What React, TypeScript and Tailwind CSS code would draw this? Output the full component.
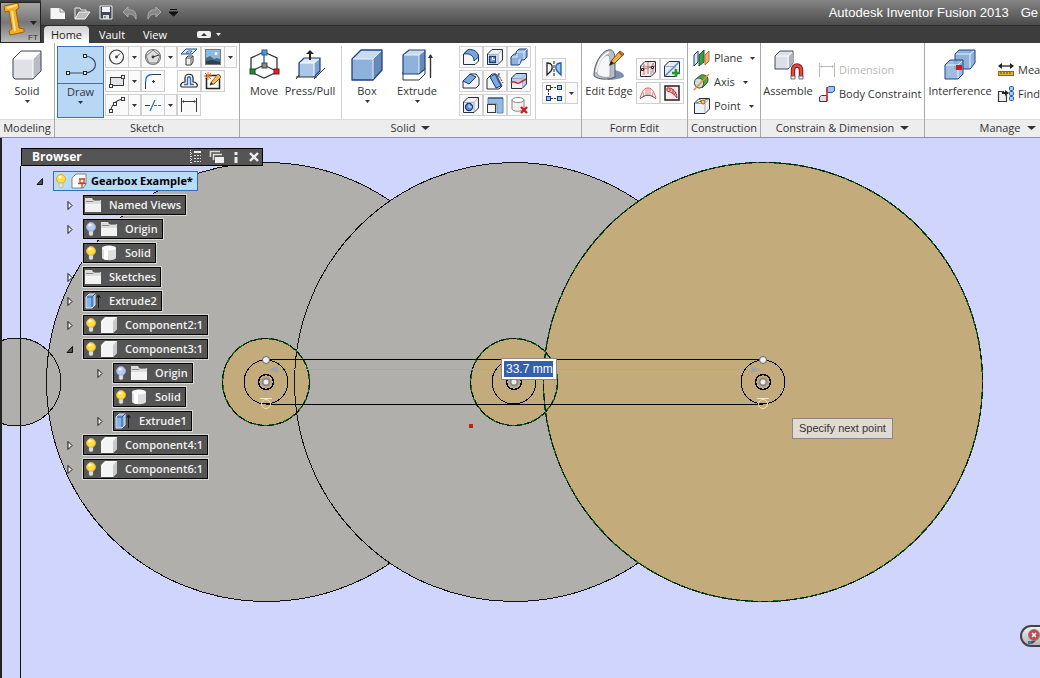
import React, { useState } from "react";

const NAVY = "#1b3a75";
const INK = "#3a3a3a";

const Svg = ({ w = 18, h = 18, children, className = "" }: any) => (
  <svg width={w} height={h} viewBox={`0 0 ${w} ${h}`} fill="none" className={`shrink-0 ${className}`} aria-hidden="true">
    {children}
  </svg>
);

const Caret = ({ className = "" }: { className?: string }) => (
  <Svg w={7} h={5} className={className}>
    <path d="M1 1h5L3.5 4z" fill="#333" />
  </Svg>
);

/* ---------- large ribbon icons ---------- */

const SolidIcon = () => (
  <Svg w={32} h={32}>
    <path d="M2 10L11 2H30L22 10z" fill="#fbfbfc" />
    <path d="M22 10L30 2V22L22 30z" fill="#b9bcc4" />
    <path d="M2 10H22V30H2z" fill="#dfe1e6" />
    <path d="M2 10L10 2H30V22L22 30H4L2 28z" stroke="#40434b" strokeLinejoin="round" />
    <path d="M3 10H22V29M22 10L29 3" stroke="#fff" />
  </Svg>
);

const DrawIcon = () => (
  <Svg w={32} h={32}>
    <path d="M3 24H19M20 7C34 8 34 23 20 24" stroke="#3b4a60" strokeWidth="1.2" />
    {[[18, 5], [1, 22], [18, 22]].map(([x, y]) => (
      <rect key={`${x}${y}`} x={x + 0.5} y={y + 0.5} width="3" height="3" fill="#fff" stroke="#222" />
    ))}
  </Svg>
);

const MoveIcon = () => (
  <Svg w={32} h={32}>
    <path d="M16 3L29 9V23L16 29L3 23V9z" stroke="#333" strokeWidth="1.3" />
    <path d="M16 16V3" stroke="#2f78c4" strokeWidth="1.5" />
    <path d="M16 16L4 22M16 16L28 22" stroke="#444" strokeWidth="1.3" />
    <rect x="14" y="1" width="5" height="5" fill="#4c97dd" stroke="#235a92" />
    <rect x="2" y="20" width="5" height="5" fill="#26892b" stroke="#125416" />
    <rect x="26" y="20" width="5" height="5" fill="#d8222a" stroke="#8a1016" />
    <rect x="14" y="14" width="5" height="5" fill="#888" stroke="#444" />
  </Svg>
);

const PressPullIcon = () => (
  <Svg w={32} h={32}>
    <path d="M5 14L10 9H26L20 14z" fill="#dcebfa" />
    <path d="M20 14L26 9V22L20 28z" fill="#7ba3cf" />
    <path d="M5 14H20V28H5z" fill="#a9c8e8" />
    <path d="M5 28V14L10 9H26V22L20 28" stroke={NAVY} strokeWidth="1.2" />
    <path d="M6 14H20V27M20 14L25 10" stroke="#fff" />
    <path d="M2 28H23M20 30L31 19M2 30L5 26" stroke="#333" />
    <path d="M16 11V4" stroke="#222" strokeWidth="2" />
    <path d="M12 5L16 1L20 5z" fill="#222" />
  </Svg>
);

const BoxIcon = () => (
  <Svg w={32} h={32}>
    <path d="M1 10L10 1H31L22 10z" fill="#c8dcf1" />
    <path d="M22 10L31 1V21L22 31z" fill="#6689b7" />
    <path d="M1 10H22V31H1z" fill="#8fb2dc" />
    <path d="M1 10L10 1H31V21L22 31H1z" stroke="#1d4288" strokeWidth="1.3" strokeLinejoin="round" />
    <path d="M2 10H22V30M22 10L30 2" stroke="#e9f2fb" />
  </Svg>
);

const ExtrudeIcon = () => (
  <Svg w={32} h={32}>
    <path d="M2 23L8 19H24V25L18 31H2z" fill="#fff" stroke="#333" />
    <path d="M2 6L8 1H24L18 6z" fill="#c8dcf1" />
    <path d="M18 6L24 1V20L18 25z" fill="#6689b7" />
    <path d="M2 6H18V25H2z" fill="#8fb2dc" />
    <path d="M2 25V6L8 1H24V20L18 25z" stroke="#1d4288" strokeWidth="1.2" />
    <path d="M3 6H18V24M18 6L23 2" stroke="#e9f2fb" />
    <path d="M29.5 29V6" stroke="#333" strokeWidth="1.4" />
    <path d="M27 9L29.5 5L32 9z" fill="#333" />
  </Svg>
);

const EditEdgeIcon = () => (
  <Svg w={32} h={32}>
    <path d="M14 31C22 31 31 29 31 27C31 24 26 22 22 21z" fill="#60759b" opacity="0.8" />
    <path d="M1 26C1 15 8 3 15 1C20 0 22 3 22 12V28C15 31 6 31 1 27z" fill="#b9bec7" stroke="#555c68" />
    <path d="M4 25C4 16 9 7 15 6C18 7 17 17 17 28C12 29 7 28 4 25z" fill="#f5f7f9" stroke="#8d94a0" strokeWidth="0.8" />
    <path d="M3 23C5 13 9 6 16 3" stroke="#fff" strokeWidth="1.5" />
    <path d="M17 16L19 11L27 2L31 5L22 14z" fill="#f0b03f" stroke="#74501f" />
    <path d="M26 3L30 7" stroke="#9d3c25" strokeWidth="1.5" />
    <path d="M16 17L18 12L21 14z" fill="#222" />
  </Svg>
);

const AssembleIcon = () => (
  <Svg w={32} h={32}>
    <path d="M3 7L8 2H21V14L16 20H3z" fill="#dcdfe5" stroke="#444a55" strokeLinejoin="round" />
    <path d="M17 7L21 3V14L17 18z" fill="#aeb3bd" />
    <path d="M4 7H16V19M16 7L20 3" stroke="#fff" />
    <path d="M21 28V21C21 15 29 15 29 21V28" stroke="#8b1114" strokeWidth="4.5" />
    <path d="M21 28V21C21 15 29 15 29 21V28" stroke="#e14a45" strokeWidth="2.5" />
    <path d="M19 27H23V30H19zM27 27H31V30H27z" fill="#eee" stroke="#555" strokeWidth="0.8" />
  </Svg>
);

const InterferenceIcon = () => (
  <Svg w={32} h={32}>
    <path d="M11 5L15 1H31V14L26 20H11z" fill="#8fb2dc" stroke="#1d4288" />
    <path d="M12 5H26V19M26 5L30 2" stroke="#e9f2fb" />
    <path d="M1 16L6 11H19V25L14 30H1z" fill="#8fb2dc" fillOpacity="0.85" stroke="#1d4288" />
    <path d="M2 16H14V29M14 16L18 12" stroke="#e9f2fb" />
    <rect x="12" y="16" width="6" height="5" fill="#dd1022" />
  </Svg>
);

/* ---------- small ribbon icons, 18 x 18 ---------- */

const CircleIcon = () => (
  <Svg>
    <circle cx="8.5" cy="9" r="7" stroke={INK} strokeWidth="1.2" />
    <path d="M8.5 9L12 5.5" stroke={INK} />
    <circle cx="8.5" cy="9" r="1.4" fill={INK} />
  </Svg>
);

const PolygonIcon = () => (
  <Svg>
    <circle cx="9" cy="9" r="7.5" stroke="#777" strokeWidth="1.2" />
    <path d="M9 2L16 8L13 15H5L2 8z" fill="#ddd" stroke="#777" />
    <path d="M9 9L15 7" stroke={INK} />
    <circle cx="9" cy="9" r="1.4" fill={INK} />
  </Svg>
);

const ProjectIcon = () => (
  <Svg>
    <path d="M6 1H17L12 6H1z" fill="#d6e8fa" stroke="#1c4f91" />
    <path d="M8 3H12L10 5H6z" fill="#fff" stroke="#1c4f91" strokeWidth="0.8" />
    <path d="M6 10L8 8H13V14L11 17H6z" fill="#eee" stroke={INK} />
    <path d="M6 10H11V16M11 10L13 8" stroke={INK} strokeWidth="0.8" />
  </Svg>
);

const PictureIcon = () => (
  <Svg>
    <rect x="1.5" y="1.5" width="15" height="15" fill="#8bbbe3" stroke="#777" />
    <path d="M2 10L6 8L10 11L13 10L16 11V16H2z" fill="#4d6b84" />
    <path d="M2 13L8 12L16 14V16H2z" fill="#2c4054" />
    <circle cx="12" cy="5.5" r="1.5" fill="#fff" />
  </Svg>
);

const RectIcon = () => (
  <Svg>
    <rect x="2.5" y="5.5" width="13" height="8" fill="#e2e4e8" stroke={INK} />
    <rect x="1.5" y="12.5" width="3" height="3" fill="#fff" stroke={INK} />
    <rect x="13.5" y="3.5" width="3" height="3" fill="#fff" stroke={INK} />
  </Svg>
);

const FilletIcon = () => (
  <Svg>
    <path d="M8 2.5H17M1.5 10V17" stroke={INK} />
    <path d="M1.5 10C1.5 5 4 2.5 8 2.5" stroke="#257ec9" strokeWidth="1.4" />
    <path d="M8 9.5H11M9.5 8V11" stroke={INK} />
  </Svg>
);

const OffsetIcon = () => (
  <Svg>
    <path d="M5 10V6C5 1 13 1 13 6V10C18 10 18 15 16 15H2C0 15 0 10 5 10z" fill="#fff" stroke="#222" strokeWidth="1.2" />
    <path d="M4 12.500H7.500V7C7.500 4 10.500 4 10.500 7V12.500H14" stroke="#2c6eb5" strokeWidth="1.5" />
  </Svg>
);

const EditSketchIcon = () => (
  <Svg>
    <rect x="2.5" y="3.5" width="13" height="13" fill="#fff" stroke="#222" strokeWidth="1.5" />
    <path d="M6 13L8 9L14 2L17 5L10 12z" fill="#f5bc4b" stroke="#7a501b" strokeWidth="0.8" />
    <path d="M4 0V8M0 4H8M1 1L7 7M7 1L1 7" stroke="#e8731f" />
    <path d="M6 13L7 10L9 12z" fill="#222" />
  </Svg>
);

const ArcIcon = () => (
  <Svg>
    <path d="M2.5 15C4 8 8 4 15 3" stroke={INK} strokeWidth="1.2" />
    <rect x="1.5" y="13.5" width="3" height="3" fill="#fff" stroke={INK} />
    <rect x="5.5" y="6.5" width="3" height="3" fill="#fff" stroke={INK} />
    <rect x="13.5" y="1.5" width="3" height="3" fill="#fff" stroke={INK} />
  </Svg>
);

const TrimIcon = () => (
  <Svg>
    <path d="M1 9.5H6" stroke={INK} />
    <path d="M6 15L11 4" stroke="#2674bc" strokeWidth="1.3" />
    <path d="M10 9.5H17" stroke="#2674bc" strokeDasharray="3 1" />
  </Svg>
);

const DimIcon = ({ color = INK }: { color?: string }) => (
  <Svg>
    <path d="M1.5 2V16M16.5 2V16M3 5.5H15" stroke={color} />
    <path d="M2 5.5L4 4V7zM16 5.5L14 4V7z" fill={color} />
  </Svg>
);

const Block = ({ fill = "#eef2f7", children }: any) => (
  <Svg>
    <path d="M1.5 6L6 1.500H16.500V12L12 16.500H1.500z" fill={fill} stroke="#26303f" strokeLinejoin="round" />
    <path d="M2 6.500H12V16M12 6.500L16 2" stroke="#8f9db0" strokeWidth="0.8" />
    {children}
  </Svg>
);

const SolidFillet = () => (
  <Svg>
    <path d="M1.500 6V16.500H13L16.500 13V7L6 2z" fill="#f3f5f8" stroke="#26303f" />
    <path d="M6 1.500C12 1 16.500 4 16.500 9L12 13C12 8 8 5 2 6z" fill="#75a6de" stroke={NAVY} />
  </Svg>
);

const ShellIcon = () => (
  <Block>
    <path d="M3.500 8.500H9.500V14.500H3.500z" fill="#6fa3df" stroke={NAVY} strokeWidth="1.3" />
    <path d="M6.500 9V11.500H9" stroke="#fff" />
  </Block>
);

const CombineIcon = () => (
  <Svg>
    <path d="M6 4L9 1H17V9L14 12H11V14L9 17H1V9L4 6H6z" fill="#8fb2dc" stroke="#1d4288" />
    <path d="M7 4H14V11M14 4L17 1M2 9H7V6M11 12H9V16" stroke="#e3effc" />
  </Svg>
);

const ChamferIcon = () => (
  <Svg>
    <path d="M1 9L8 2H14L17 6V13L14 16H1z" fill="#f3f5f8" stroke="#26303f" />
    <path d="M1 9L8 2L14 5L7 12z" fill="#79a9df" stroke={NAVY} />
  </Svg>
);

const DraftIcon = () => (
  <Svg>
    <path d="M1 7L6 2H10L16 14L13 17H1z" fill="#f3f5f8" stroke="#26303f" />
    <path d="M4 5L9 2L15 14L10 16z" fill="#79a9df" stroke={NAVY} />
    <path d="M12 2L17 11M12 5V2H15" stroke={INK} strokeDasharray="2 1" />
  </Svg>
);

const SplitIcon = () => (
  <Block fill="#b7d2ef">
    <path d="M2 10H12V16H2z" fill="#eee" />
    <path d="M1 11C4 7 7 14 11 10L16 7" stroke="#d8232a" strokeWidth="1.5" />
  </Block>
);

const HoleIcon = () => (
  <Block>
    <circle cx="7" cy="11" r="3.5" fill="#5f97dc" stroke={NAVY} strokeWidth="1.3" />
    <path d="M7 8V11H10" stroke="#d9e9fb" />
  </Block>
);

const ScaleIcon = () => (
  <Svg>
    <path d="M2 2H17V17H11V8H2z" fill="#94bbe4" stroke="#6189b5" />
    <rect x="1.5" y="8.500" width="8" height="8" fill="#f4f4f4" stroke={INK} />
    <path d="M2 2H17" stroke={NAVY} />
  </Svg>
);

const DeleteIcon = () => (
  <Svg>
    <path d="M2 4V13C3 16 12 16 14 13V4" fill="#f0f0f0" stroke="#888" />
    <ellipse cx="8" cy="4" rx="6" ry="2.5" fill="#fff" stroke="#888" />
    <path d="M11 11L17 17M17 11L11 17" stroke="#d31a20" strokeWidth="2.4" />
  </Svg>
);

const MirrorIcon = () => (
  <Svg>
    <path d="M2 3C8 3 8 8 6 11L2 15z" fill="#fff" stroke="#222" strokeWidth="1.3" />
    <path d="M16 3C10 3 10 8 12 11L16 15z" fill="#8fc0f0" stroke="#1b5ea8" strokeWidth="1.3" />
    <path d="M9 1V17" stroke="#222" strokeDasharray="3 1" />
  </Svg>
);

const PatternIcon = () => (
  <Svg>
    <path d="M6 3.500H12M3.500 6V12M6 14.500H12" stroke={INK} strokeDasharray="2 1" />
    <rect x="1.500" y="1.500" width="4" height="4" fill="#fff" stroke={INK} />
    <rect x="12.500" y="1.500" width="4" height="4" fill="#9bc4f0" stroke={NAVY} />
    <rect x="1.500" y="12.500" width="4" height="4" fill="#9bc4f0" stroke={NAVY} />
    <rect x="12.500" y="12.500" width="4" height="4" fill="#9bc4f0" stroke={NAVY} />
  </Svg>
);

const ControlPointsIcon = () => (
  <Block fill="#f4e8e8">
    <path d="M5 4V15M9 2V14M14 3V13M1 10L16 6" stroke="#c0494b" strokeWidth="0.8" />
    <path d="M2.500 8.500H4.500V10.500H2.500zM12.500 6.500H14.500V8.500H12.500z" fill="#fff" stroke="#222" />
  </Block>
);

const AddEdgeIcon = () => (
  <Block fill="#e3eaf2">
    <path d="M2 16L16 2" stroke="#5b87ba" strokeWidth="1.5" />
    <path d="M13 9V17M9 13H17" stroke="#2b9532" strokeWidth="2.4" />
  </Block>
);

const CurvatureIcon = () => (
  <Svg>
    <path d="M1 14C4 5 6 4 9 4C12 4 14 5 17 14" stroke="#cf6767" />
    <path d="M4 8L5 13M7 5V12M9 4V12M11 5V12M14 8L13 13" stroke="#d98585" />
    <path d="M1 15C6 10 12 10 17 15" stroke="#555" />
  </Svg>
);

const ZebraIcon = () => (
  <Svg>
    <path d="M2 2H16V16H2z" fill="#f8eaea" stroke="#222" strokeWidth="1.5" />
    <path d="M4 4C9 3 14 8 14 14C12 11 9 8 4 7z" fill="#efb4b4" stroke="#bd3232" />
    <path d="M7 4V7M10 5V9M13 8L11 11" stroke="#bd3232" />
  </Svg>
);

const PlaneIcon = () => (
  <Svg>
    <path d="M1 6L5 2V13L1 17z" fill="#dbe6f2" stroke={NAVY} />
    <path d="M6 6L11 1V13L6 17z" fill="#38a043" stroke="#1b5b22" />
    <path d="M12 6L16 2V12L12 16z" fill="#f3b07c" stroke="#c96a2a" />
  </Svg>
);

const AxisIcon = () => (
  <Svg>
    <path d="M3 6L8 2C13 1 17 5 14 10L9 15z" fill="#50a64b" stroke="#285e26" />
    <ellipse cx="6" cy="10" rx="4.5" ry="5" transform="rotate(-30 6 10)" fill="#d2dde0" stroke="#38683a" />
    <path d="M1 17L16 1" stroke="#ed8a34" strokeWidth="1.5" />
  </Svg>
);

const PointIcon = () => (
  <Block>
    <path d="M3 6L15 2M6 2L12 6" stroke="#328a37" />
    <circle cx="10" cy="5" r="2" fill="#f2d14d" stroke="#c0532c" />
  </Block>
);

const BodyConstraintIcon = () => (
  <Svg>
    <path d="M1.500 12L3.500 10.500H9V16.500H1.500z" fill="#dfe1e5" stroke={INK} />
    <path d="M9 3L11 1.500H16.500V6L14 7.500H9z" fill="#9cc5ef" stroke="#29609f" />
    <path d="M9 2V16" stroke="#d8222a" strokeWidth="1.5" />
  </Svg>
);

const MeasureIcon = () => (
  <Svg>
    <path d="M2 5H16" stroke="#222" strokeWidth="1.3" />
    <path d="M1 5L5 2V8zM17 5L13 2V8z" fill="#222" />
    <rect x="1.5" y="10.500" width="15" height="4" fill="#e5b334" stroke="#8d6717" />
    <path d="M4 11V13M7 11V13M10 11V13M13 11V13" stroke="#5d440f" />
  </Svg>
);

const FindIcon = () => (
  <Svg>
    <path d="M7 6.500H1.500V16.500H9.500V10" fill="#eee" stroke={INK} strokeWidth="1.2" />
    <path d="M5 8H9" stroke="#222" strokeWidth="2" />
    <path d="M8 5L12 8L8 11z" fill="#222" />
    {[1, 6, 11].map((y) => (
      <rect key={y} x="12.500" y={y + 0.5} width="4" height="4" rx="1" fill="#a4cbf2" stroke="#225a9d" />
    ))}
  </Svg>
);

/* ---------- browser tree icons ---------- */

const Bulb = ({ on }: { on: boolean }) => (
  <Svg w={12} h={16}>
    <circle cx="6" cy="6" r="4.500" fill={on ? "#ffdf44" : "#b7cbf2"} stroke={on ? "#e0ac28" : "#91a6d0"} />
    <circle cx="5" cy="4" r="1.600" fill="#fff" opacity="0.85" />
    <path d="M4 10H8V14L6 15L4 14z" fill="#e2e2e2" stroke="#999" strokeWidth="0.5" />
  </Svg>
);

const FolderIcon = () => (
  <Svg w={16} h={16}>
    <path d="M0 1H7L8 3H16V15H0z" fill="#dcdcdc" />
    <path d="M1 4.500H8L9 3.500H15" stroke="#8a8a8a" />
    <path d="M0 7H16V15H0z" fill="#f2f2f2" />
  </Svg>
);

const CylinderIcon = () => (
  <Svg w={16} h={16}>
    <path d="M1 3V13C3 16 13 16 15 13V3z" fill="#dedede" />
    <path d="M3 4V14C4 15 5 15 7 15V4z" fill="#fff" />
    <ellipse cx="8" cy="3" rx="7" ry="2.500" fill="#fafafa" />
  </Svg>
);

const CubeIcon = () => (
  <Svg w={16} h={16}>
    <path d="M0 4L4 0H16V12L12 16H0z" fill="#f4f4f4" />
    <path d="M12 4L16 0V12L12 16z" fill="#c8c8c8" />
  </Svg>
);

const ExtrudeNodeIcon = () => (
  <Svg w={16} h={16}>
    <path d="M1 4L4 1H10V12L7 15H1z" fill="#86b3e6" stroke="#dbe9f8" />
    <path d="M2 4H7V14M7 4L10 1" stroke="#2a5596" />
    <path d="M13.500 15V3M11.500 5L13.500 2L15.500 5" stroke="#191919" />
  </Svg>
);

const RootIcon = () => (
  <Svg w={16} h={16}>
    <path d="M1 5L5 1H15V11L12 15H1z" fill="#fff" stroke="#666" strokeWidth="0.8" />
    <path d="M8 6H14M9 6V10H13V6M7 10.500H15M11 11V15" stroke="#c4451d" strokeWidth="1.3" />
  </Svg>
);

/* ---------- ribbon building blocks ---------- */

const BigButton = ({ icon: Icon, label, caret = false, width }: any) => (
  <button className={`flex h-[72px] flex-col items-center pt-[3px] ${width}`}>
    <Icon />
    <span className="mt-[2px] leading-4 whitespace-nowrap">{label}</span>
    {caret && <Caret />}
  </button>
);

const Cell = ({ icon: Icon, label, drop = false }: any) => (
  <div className="flex">
    <button aria-label={label} className="flex h-[22px] w-6 items-center justify-center border border-[#d0d0d0] bg-[#fafafa]">
      <Icon />
    </button>
    {drop && (
      <button aria-label={`${label} options`} className="flex h-[22px] w-3 items-center justify-center border border-l-0 border-[#d0d0d0] bg-[#fafafa]">
        <Caret />
      </button>
    )}
  </div>
);

const RowButton = ({ icon, label, caret = false, disabled = false }: any) => (
  <button disabled={disabled} className="flex h-6 items-center gap-[3px] whitespace-nowrap disabled:text-[#b9b9b9]">
    {icon}
    <span>{label}</span>
    {caret && <Caret className="ml-1" />}
  </button>
);

const Panel = ({ title, width, more = false, children }: any) => (
  <section className={`flex shrink-0 flex-col border-r border-[#a9a9a9] ${width}`}>
    <div className="flex h-[76px] bg-white pt-[3px]">{children}</div>
    <footer className="flex h-[18px] items-center justify-center gap-[6px] border-t border-[#dcdcdc] bg-[#ededed] pb-[2px]">
      <span className="leading-4">{title}</span>
      {more && (
        <Svg w={9} h={6}>
          <path d="M0 1H9L4.500 5z" fill="#333" />
        </Svg>
      )}
    </footer>
  </section>
);

const Ribbon = () => (
  <div className="flex overflow-hidden border-b border-[#8d90a8] bg-[#ededed] font-['Open_Sans','Noto_Sans',sans-serif] text-[11px] text-[#333]">
    <Panel title="Modeling" width="w-[55px]">
      <BigButton icon={SolidIcon} label="Solid" caret width="w-[54px]" />
    </Panel>
    <Panel title="Sketch" width="w-[185px]">
      <button className="ml-[2px] flex h-[72px] w-[47px] flex-col items-center border border-[#3973b6] bg-[#b7d7f5]">
        <span className="flex h-[37px] w-full justify-center border-b border-[#3973b6] pt-[2px]">
          <DrawIcon />
        </span>
        <span className="leading-4">Draw</span>
        <Caret />
      </button>
      <div className="ml-[1px] flex flex-col gap-[2px]">
        <div className="flex">
          <Cell icon={CircleIcon} label="Circle" drop />
          <Cell icon={PolygonIcon} label="Polygon" drop />
          <Cell icon={ProjectIcon} label="Project" />
          <Cell icon={PictureIcon} label="Image" drop />
        </div>
        <div className="flex">
          <Cell icon={RectIcon} label="Rectangle" drop />
          <Cell icon={FilletIcon} label="Sketch fillet" />
          <div className="ml-3 flex">
            <Cell icon={OffsetIcon} label="Offset" />
            <Cell icon={EditSketchIcon} label="Edit sketch" />
          </div>
        </div>
        <div className="flex">
          <Cell icon={ArcIcon} label="Arc" drop />
          <Cell icon={TrimIcon} label="Trim" drop />
          <Cell icon={DimIcon} label="Sketch dimension" />
        </div>
      </div>
    </Panel>
    <Panel title="Solid" width="w-[342px]" more>
      <BigButton icon={MoveIcon} label="Move" width="w-12" />
      <BigButton icon={PressPullIcon} label="Press/Pull" width="w-[44px]" />
      <div className="ml-[9px] border-r border-[#d0d0d0]" />
      <BigButton icon={BoxIcon} label="Box" caret width="w-[50px]" />
      <BigButton icon={ExtrudeIcon} label="Extrude" caret width="w-[50px]" />
      <div className="ml-[17px] grid grid-cols-3 content-start gap-y-[2px] self-start">
        <Cell icon={SolidFillet} label="Fillet" />
        <Cell icon={ShellIcon} label="Shell" />
        <Cell icon={CombineIcon} label="Combine" />
        <Cell icon={ChamferIcon} label="Chamfer" />
        <Cell icon={DraftIcon} label="Draft" />
        <Cell icon={SplitIcon} label="Split" />
        <Cell icon={HoleIcon} label="Hole" />
        <Cell icon={ScaleIcon} label="Scale" />
        <Cell icon={DeleteIcon} label="Delete" />
      </div>
      <div className="ml-1 border-r border-[#d0d0d0]" />
      <div className="ml-[6px] flex flex-col gap-[2px] pt-3">
        <Cell icon={MirrorIcon} label="Mirror" />
        <Cell icon={PatternIcon} label="Pattern" drop />
      </div>
    </Panel>
    <Panel title="Form Edit" width="w-[106px]">
      <BigButton icon={EditEdgeIcon} label="Edit Edge" width="w-[54px]" />
      <div className="grid grid-cols-2 content-start gap-y-[2px] pt-3">
        <Cell icon={ControlPointsIcon} label="Control points" />
        <Cell icon={AddEdgeIcon} label="Add edge" />
        <Cell icon={CurvatureIcon} label="Curvature" />
        <Cell icon={ZebraIcon} label="Zebra" />
      </div>
    </Panel>
    <Panel title="Construction" width="w-[73px]">
      <div className="flex flex-col items-start pl-[5px]">
        <RowButton icon={<PlaneIcon />} label="Plane" caret />
        <RowButton icon={<AxisIcon />} label="Axis" caret />
        <RowButton icon={<PointIcon />} label="Point" caret />
      </div>
    </Panel>
    <Panel title="Constrain & Dimension" width="w-[164px]" more>
      <BigButton icon={AssembleIcon} label="Assemble" width="w-[54px]" />
      <div className="flex flex-col items-start pt-3 pl-[3px]">
        <RowButton icon={<DimIcon color="#b9b9b9" />} label="Dimension" disabled />
        <RowButton icon={<BodyConstraintIcon />} label="Body Constraint" />
      </div>
    </Panel>
    <Panel title="Manage" width="w-[166px]" more>
      <BigButton icon={InterferenceIcon} label="Interference" width="w-[70px]" />
      <div className="flex flex-col items-start pt-3 pl-[2px]">
        <RowButton icon={<MeasureIcon />} label="Mea" />
        <RowButton icon={<FindIcon />} label="Find" />
      </div>
    </Panel>
  </div>
);

const TitleBar = () => (
  <header className="flex bg-[#3d3d3d] font-['Open_Sans','Noto_Sans',sans-serif] text-[11px] text-white">
    <button aria-label="Application menu" className="mt-[2px] h-[41px] w-[41px] shrink-0 border border-[#222] bg-linear-to-b from-[#a5a5a5] via-[#777] to-[#bbb]">
      <svg width="39" height="39" viewBox="0 0 39 39">
        <path d="M3 3L17 0L18 5L15 7L18 25L23 26V29L9 32L8 28L11 26L8 8L4 9z" fill="#f5ad25" stroke="#9c6208" />
        <path d="M6 5L16 2M11 8L14 28" stroke="#ffe39a" strokeWidth="2" />
        <path d="M29 18H36L32.500 22z" fill="#222" />
        <text x="27" y="37" fontSize="8" fontFamily="Liberation Sans, sans-serif" fill="#333">FT</text>
      </svg>
    </button>
    <div className="flex min-w-0 flex-1 flex-col">
      <div className="flex h-[26px] items-center border-b border-[#2b2b2b] bg-linear-to-b from-[#858585] to-[#4c4c4c] pl-2">
        <div className="flex items-center gap-[6px]">
          <button aria-label="New"><Svg>
            <path d="M1.500 4H11L16 8V15H1.500z" fill="#f5f5f5" />
            <path d="M11 4V8H16" stroke="#888" />
          </Svg></button>
          <button aria-label="Open"><Svg>
            <path d="M2 15V4H7L8 6H13V8" stroke="#eee" />
            <path d="M2 15L6 8H17L12 15z" fill="#bbb" stroke="#f5f5f5" />
          </Svg></button>
          <button aria-label="Save"><Svg>
            <path d="M3 2H15V15H3z" fill="#3f4a58" stroke="#eee" />
            <path d="M5 3H13V8H5z" fill="#f4f4f4" />
            <path d="M6 11H12V15H6z" fill="#ddd" />
            <path d="M8 12V14" stroke="#333" />
          </Svg></button>
          <button aria-label="Undo"><Svg>
            <path d="M2 8L7 3V6C12 5 16 8 15 15C13 11 11 10 7 10V13z" fill="#888" stroke="#aaa" />
          </Svg></button>
          <button aria-label="Redo"><Svg>
            <path d="M16 8L11 3V6C6 5 2 8 3 15C5 11 7 10 11 10V13z" fill="#888" stroke="#aaa" />
          </Svg></button>
          <button aria-label="Customize"><Svg w={9} h={9}>
            <path d="M1 1.500H8M0 4H9L4.500 8z" stroke="#111" fill="#111" />
          </Svg></button>
        </div>
        <h1 className="ml-auto flex gap-3 pr-[2px] font-['Liberation_Sans',Arial,sans-serif] text-[13px] whitespace-nowrap">
          <span>Autodesk Inventor Fusion 2013</span>
          <span>Ge</span>
        </h1>
      </div>
      <nav className="flex h-[17px] items-center pl-[3px]">
        <button className="h-full w-[45px] rounded-t-sm bg-linear-to-b from-[#d0d0d0] to-white leading-4 text-[#222]">Home</button>
        <button className="w-[46px] leading-4">Vault</button>
        <button className="w-10 leading-4">View</button>
        <button aria-label="Minimize ribbon" className="ml-[22px] flex items-center gap-[5px]">
          <Svg w={14} h={8}>
            <rect width="14" height="7" rx="2" fill="#eee" />
            <path d="M4 5H10L7 2z" fill="#333" />
          </Svg>
          <Svg w={5} h={4}>
            <path d="M0 0H5L2.500 3z" fill="#eee" />
          </Svg>
        </button>
      </nav>
    </div>
  </header>
);

/* ---------- model browser ---------- */

type Node = {
  label: string;
  level: number;
  icon: React.FC;
  bulb?: "on" | "off";
  state?: "open" | "closed";
};

const nodes: Node[] = [
  { label: "Gearbox Example*", level: 0, icon: RootIcon, bulb: "on", state: "open" },
  { label: "Named Views", level: 1, icon: FolderIcon, state: "closed" },
  { label: "Origin", level: 1, icon: FolderIcon, bulb: "off", state: "closed" },
  { label: "Solid", level: 1, icon: CylinderIcon, bulb: "on" },
  { label: "Sketches", level: 1, icon: FolderIcon, state: "closed" },
  { label: "Extrude2", level: 1, icon: ExtrudeNodeIcon, state: "closed" },
  { label: "Component2:1", level: 1, icon: CubeIcon, bulb: "on", state: "closed" },
  { label: "Component3:1", level: 1, icon: CubeIcon, bulb: "on", state: "open" },
  { label: "Origin", level: 2, icon: FolderIcon, bulb: "off", state: "closed" },
  { label: "Solid", level: 2, icon: CylinderIcon, bulb: "on" },
  { label: "Extrude1", level: 2, icon: ExtrudeNodeIcon, state: "closed" },
  { label: "Component4:1", level: 1, icon: CubeIcon, bulb: "on", state: "closed" },
  { label: "Component6:1", level: 1, icon: CubeIcon, bulb: "on", state: "closed" }
];

const indents = ["pl-[14px]", "pl-[44px]", "pl-[74px]"];

const TreeRow = ({ node }: { node: Node }) => {
  const Icon = node.icon;
  const root = node.level === 0;
  return (
    <li className={`flex h-5 items-center ${indents[node.level]}`}>
      <span className="w-[18px]">
        {node.state === "closed" && (
          <Svg w={9} h={9}>
            <path d="M3 0.500L7 4.500L3 8.500z" fill="#fff" stroke="#111" />
          </Svg>
        )}
        {node.state === "open" && (
          <Svg w={9} h={9}>
            <path d="M7.500 1.500V7.500H2z" fill="#555" stroke="#111" />
          </Svg>
        )}
      </span>
      <button
        className={`flex h-5 items-center gap-1 border pl-[1px] text-[11px] whitespace-nowrap ${
          root
            ? "border-[#2f6fb5] bg-[#b9dcf8] pr-[4px] font-bold text-black"
            : "border-black bg-[#555] pr-[4px] font-semibold text-[#f2f2f2] ring-1 ring-[#d8d8d8]"
        }`}
      >
        {node.bulb && <Bulb on={node.bulb === "on"} />}
        <Icon />
        <span className={root ? "leading-4" : "ml-1 leading-4"}>{node.label}</span>
      </button>
    </li>
  );
};

const Browser = () => (
  <aside className="relative ml-[21px] w-[242px] pt-[10px] font-['Open_Sans','Noto_Sans',sans-serif]">
    <div className="flex h-[18px] items-center border border-black bg-[#555] pr-[1px] pl-[10px] text-white">
      <h2 className="flex-1 text-[12px] leading-4 font-bold">Browser</h2>
      <div className="flex items-center gap-[6px]">
        <button aria-label="Details"><Svg w={14} h={14}>
          <path d="M1.500 0V14M2 3.500H4M2 6.500H4M2 9.500H4M2 12.500H4" stroke="#ddd" strokeDasharray="1 1" />
          <path d="M5 2H12" stroke="#eee" strokeWidth="2" />
          <path d="M5 5.500H12M5 8.500H12M5 11.500H12" stroke="#ddd" strokeDasharray="2 1" />
        </Svg></button>
        <button aria-label="Windows"><Svg w={16} h={14}>
          <path d="M1.500 7V1.500H11M4.500 10V4.500H13" stroke="#ddd" strokeWidth="1.5" />
          <rect x="6" y="7" width="9" height="6" fill="#eee" />
        </Svg></button>
        <button aria-label="Info"><Svg w={10} h={14}>
          <path d="M5 2V5M5 7V13" stroke="#eee" strokeWidth="3" />
        </Svg></button>
        <button aria-label="Close"><Svg w={14} h={14}>
          <path d="M3 3L11 11M11 3L3 11" stroke="#eee" strokeWidth="2.4" />
        </Svg></button>
      </div>
    </div>
    <ul className="mt-[5px] flex flex-col gap-1">
      {nodes.map((n, i) => (
        <TreeRow key={i} node={n} />
      ))}
    </ul>
  </aside>
);

/* ---------- gear drawing ---------- */

const GREY = "#b0afab";
const TAN = "#c4ab7b";

const Drawing = () => (
  <svg className="absolute inset-0 h-full w-full" fill="none" aria-hidden="true" shapeRendering="crispEdges">
    <g stroke="#111">
      <circle cx="17" cy="244" r="44" fill={GREY} />
      <circle cx="266" cy="244" r="219.500" fill={GREY} />
      <circle cx="17" cy="244" r="44" />
      <circle cx="514" cy="244" r="219.500" fill={GREY} />
    </g>
    <circle cx="266" cy="244" r="43.500" fill={TAN} />
    <circle cx="514" cy="244" r="219.500" stroke="#111" />
    <circle cx="763" cy="244" r="219.500" fill={TAN} />
    <circle cx="514" cy="244" r="43.500" fill={TAN} />
    {[[266, 43.5], [514, 43.5], [763, 219.5]].map(([cx, r]) => (
      <g key={cx}>
        <circle cx={cx} cy="244" r={r} stroke="#1d6a1d" strokeWidth="1.5" />
        <circle cx={cx} cy="244" r={r} stroke="#111" strokeDasharray="7 3" />
      </g>
    ))}
    <path d="M20.500 28V540" stroke="#111" />
    <path d="M1 0V540" stroke="#222" strokeWidth="2" />
    <path d="M276 231.500H750" stroke="#a9a9a4" />
    <path d="M268 231.500L278 228V235zM761 231.500L751 228V235z" fill="#a0a3a8" shapeRendering="auto" />
    <path d="M266 221.500H763M266 266.500H763" stroke="#000" />
    {[266, 514, 763].map((cx) => (
      <g key={cx} stroke="#000">
        <circle cx={cx} cy="244" r="22" />
        <circle cx={cx} cy="244" r="7.500" strokeWidth="1.5" />
        <circle cx={cx} cy="244" r="3.500" fill="#eee" stroke="#888" strokeWidth="2" shapeRendering="auto" />
      </g>
    ))}
    {[266, 763].map((cx) => (
      <g key={cx} shapeRendering="auto">
        <circle cx={cx} cy="222" r="3.500" fill="#eee" stroke="#666" />
        <path d={`M${cx} 252V260`} stroke="#aaa" />
        <path d={`M${cx - 6} 260.5H${cx + 6}`} stroke="#f6e6c8" />
        <circle cx={cx} cy="266" r="4.500" stroke="#f6e6c8" />
      </g>
    ))}
    <rect x="469" y="286" width="4" height="4" fill="#e01212" />
  </svg>
);

const App = () => {
  const [distance, setDistance] = useState("33.7 mm");

  return (
    <div className="flex min-h-screen flex-col bg-[#d0d5fe]">
      <TitleBar />
      <Ribbon />
      <main className="relative flex-1 overflow-hidden bg-[#d0d5fe]">
        <Drawing />
        <Browser />
        <div className="absolute top-[220px] left-[501px] h-[22px] w-[56px] border border-[#888] bg-white p-[2px] font-['Liberation_Sans',Arial,sans-serif]">
          <input
            aria-label="Distance"
            value={distance}
            onChange={(e) => setDistance(e.target.value)}
            className="block h-4 w-[49px] bg-[#345fac] pl-[2px] text-[12px] leading-4 text-white outline-none"
          />
        </div>
        <div role="tooltip" className="absolute top-[280px] left-[792px] flex h-[21px] items-center border border-[#888] bg-[#e1dad3] px-[6px] font-['Liberation_Sans',Arial,sans-serif] text-[11px] whitespace-nowrap text-[#333]">
          Specify next point
        </div>
        <button aria-label="Errors" className="absolute top-[487px] right-0 flex h-[22px] w-5 items-center justify-end rounded-l-full border-2 border-r-0 border-[#444] bg-linear-to-b from-[#eee] to-[#b5b5b5]">
          <Svg w={13} h={18}>
            <path d="M1 14H5V17H1z" fill="#3777aa" />
            <path d="M5 16L11 10" stroke="#444" strokeWidth="2" />
            <circle cx="7" cy="8" r="5.500" fill="#c2474c" stroke="#888" />
            <path d="M5 6L9 10M9 6L5 10" stroke="#fff" strokeWidth="1.5" />
          </Svg>
        </button>
      </main>
    </div>
  );
};

export default App;
